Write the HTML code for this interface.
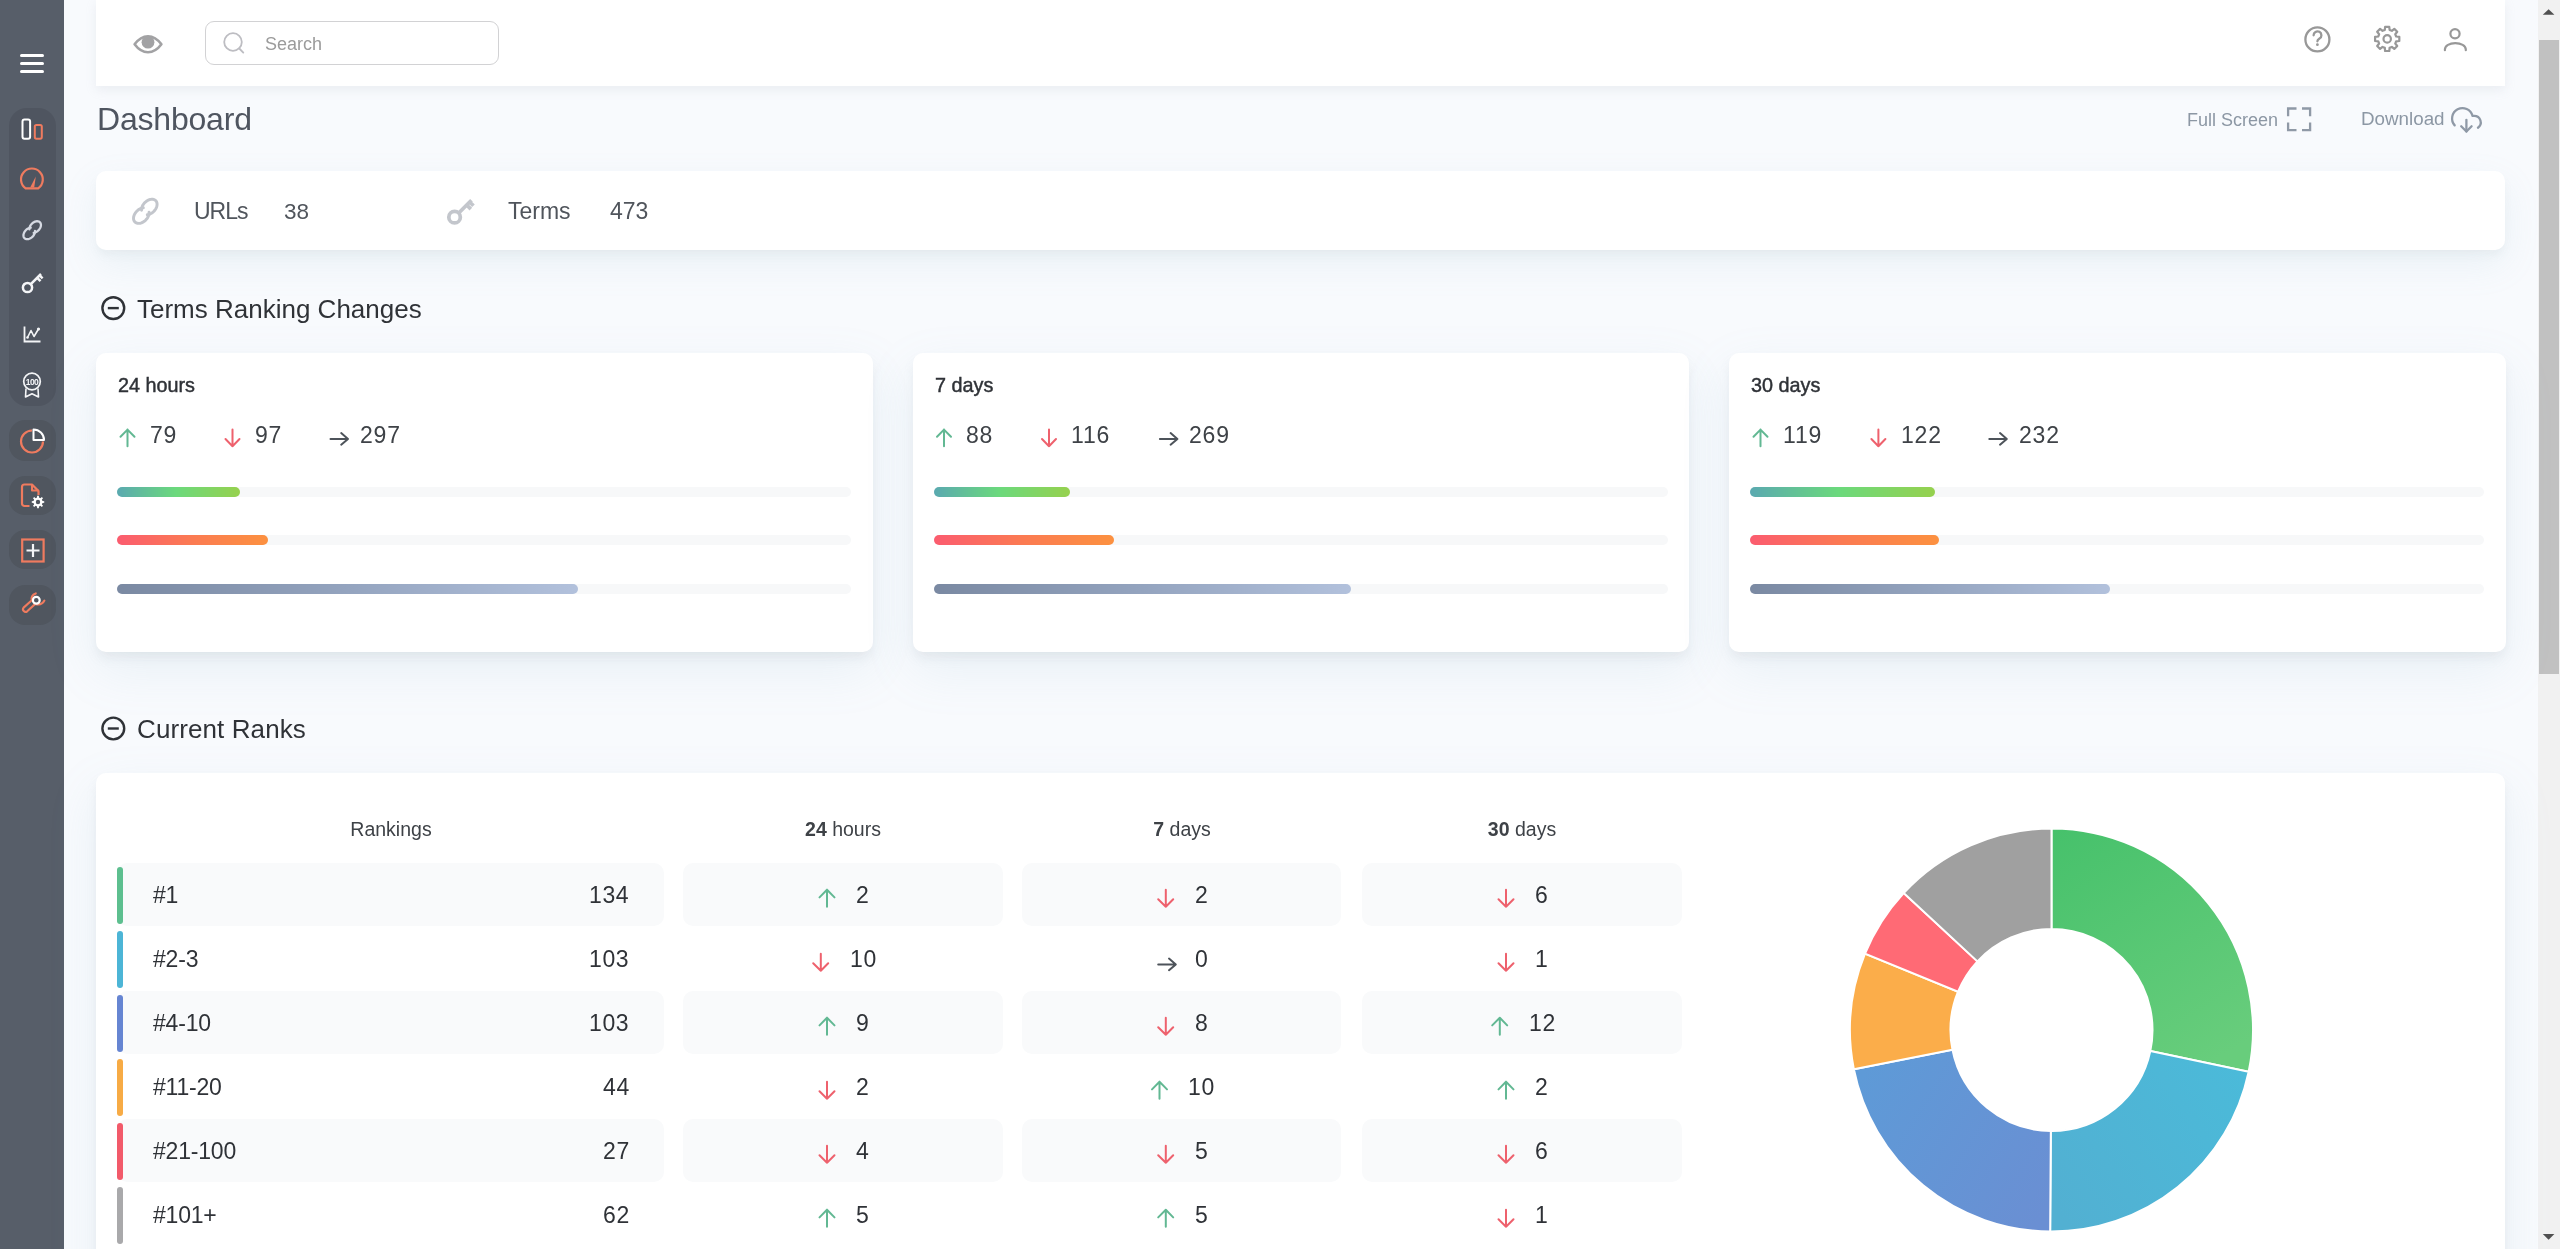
<!DOCTYPE html>
<html><head><meta charset="utf-8"><style>
*{margin:0;padding:0;box-sizing:border-box}
html,body{width:2560px;height:1249px;overflow:hidden}
body{background:#f8fafd;font-family:"Liberation Sans",sans-serif;position:relative;color:#3a3d42}
.a{position:absolute}
.t{position:absolute;line-height:1;white-space:nowrap;will-change:transform}
svg{position:absolute;overflow:visible}
</style></head><body>
<div class="a" style="left:0;top:0;width:64px;height:1249px;background:#575e69"></div>
<div class="a" style="left:20px;top:53.5px;width:24px;height:3px;border-radius:1.5px;background:#fff"></div>
<div class="a" style="left:20px;top:61.5px;width:24px;height:3px;border-radius:1.5px;background:#fff"></div>
<div class="a" style="left:20px;top:69.5px;width:24px;height:3px;border-radius:1.5px;background:#fff"></div>
<div class="a" style="left:9px;top:108px;width:47px;height:298px;background:#4f5560;border-radius:18px"></div>
<div class="a" style="left:9px;top:420px;width:47px;height:41px;background:#50565f;border-radius:16px"></div>
<div class="a" style="left:9px;top:476px;width:47px;height:39px;background:#50565f;border-radius:16px"></div>
<div class="a" style="left:9px;top:530px;width:47px;height:39px;background:#50565f;border-radius:16px"></div>
<div class="a" style="left:9px;top:585px;width:47px;height:40px;background:#50565f;border-radius:16px"></div>
<div class="a" style="left:96px;top:0;width:2409px;height:86px;background:#fff;box-shadow:0 4px 10px rgba(170,176,186,.16)"></div>
<div class="a" style="left:205px;top:21px;width:294px;height:44px;border:1.5px solid #d2d2d4;border-radius:9px;background:#fff"></div>
<div class="t" style="top:35.0px;font-size:18px;color:#9b9b9b;left:264.5px;">Search</div>
<div class="a" style="left:2538px;top:0;width:22px;height:1249px;background:#f1f1f1"></div>
<div class="a" style="left:2539px;top:40px;width:20px;height:634px;background:#c1c1c1"></div>
<svg class="a" style="left:0;top:0" width="2560" height="1249"><path d="M2542.8 14.8L2548.6 9.2L2554.4 14.8Z" fill="#505050"/><path d="M2542.8 1234L2548.6 1239.8L2554.4 1234Z" fill="#505050"/></svg>
<div class="t" style="top:103.4px;font-size:32px;color:#4f5560;left:97.3px;letter-spacing:-0.2px;">Dashboard</div>
<div class="t" style="top:110.6px;font-size:18px;color:#8c97a4;left:2187.0px;">Full Screen</div>
<div class="t" style="top:109.9px;font-size:18.8px;color:#8c97a4;left:2361.0px;">Download</div>
<div class="a" style="left:96px;top:171px;width:2409px;height:79px;background:#fff;border-radius:10px;box-shadow:0 6px 10px -2px rgba(150,154,160,.1),0 14px 36px rgba(130,180,200,.12)"></div>
<div class="t" style="top:200.3px;font-size:23px;color:#50555c;left:194.0px;letter-spacing:-1px;">URLs</div>
<div class="t" style="top:200.7px;font-size:22.5px;color:#50555c;left:283.5px;">38</div>
<div class="t" style="top:200.3px;font-size:23px;color:#50555c;left:508.0px;">Terms</div>
<div class="t" style="top:200.3px;font-size:23px;color:#50555c;left:610.0px;">473</div>
<div class="t" style="top:295.5px;font-size:26px;color:#2f3237;left:137.0px;">Terms Ranking Changes</div>
<div class="t" style="top:715.6px;font-size:26px;color:#2f3237;left:137.0px;letter-spacing:0.1px;">Current Ranks</div>
<div class="a" style="left:96px;top:353px;width:776.5px;height:299px;background:#fff;border-radius:10px;box-shadow:0 7px 12px -2px rgba(150,154,160,.16),0 18px 50px rgba(130,180,200,.13)"></div>
<div class="t" style="top:376.0px;font-size:19.8px;color:#2f3237;left:118.0px;-webkit-text-stroke:0.45px #2f3237;">24 hours</div>
<div class="a" style="left:117px;top:487.0px;width:734px;height:10px;border-radius:5px;background:#f7f8f9"></div>
<div class="a" style="left:117px;top:487.0px;width:122.6px;height:10px;border-radius:5px;background:linear-gradient(90deg,#5aa9b0,#6bd97c 48%,#96d14e)"></div>
<div class="a" style="left:117px;top:535.3px;width:734px;height:10px;border-radius:5px;background:#f7f8f9"></div>
<div class="a" style="left:117px;top:535.3px;width:150.5px;height:10px;border-radius:5px;background:linear-gradient(90deg,#fb5c6f,#fb7b52 50%,#fc9140)"></div>
<div class="a" style="left:117px;top:583.6px;width:734px;height:10px;border-radius:5px;background:#f7f8f9"></div>
<div class="a" style="left:117px;top:583.6px;width:460.9px;height:10px;border-radius:5px;background:linear-gradient(90deg,#7a89a2,#94a4bf 50%,#b2c1dc)"></div>
<div class="a" style="left:912.5px;top:353px;width:776.5px;height:299px;background:#fff;border-radius:10px;box-shadow:0 7px 12px -2px rgba(150,154,160,.16),0 18px 50px rgba(130,180,200,.13)"></div>
<div class="t" style="top:376.0px;font-size:19.8px;color:#2f3237;left:934.5px;-webkit-text-stroke:0.45px #2f3237;">7 days</div>
<div class="a" style="left:933.5px;top:487.0px;width:734px;height:10px;border-radius:5px;background:#f7f8f9"></div>
<div class="a" style="left:933.5px;top:487.0px;width:136.6px;height:10px;border-radius:5px;background:linear-gradient(90deg,#5aa9b0,#6bd97c 48%,#96d14e)"></div>
<div class="a" style="left:933.5px;top:535.3px;width:734px;height:10px;border-radius:5px;background:#f7f8f9"></div>
<div class="a" style="left:933.5px;top:535.3px;width:180.0px;height:10px;border-radius:5px;background:linear-gradient(90deg,#fb5c6f,#fb7b52 50%,#fc9140)"></div>
<div class="a" style="left:933.5px;top:583.6px;width:734px;height:10px;border-radius:5px;background:#f7f8f9"></div>
<div class="a" style="left:933.5px;top:583.6px;width:417.4px;height:10px;border-radius:5px;background:linear-gradient(90deg,#7a89a2,#94a4bf 50%,#b2c1dc)"></div>
<div class="a" style="left:1729px;top:353px;width:776.5px;height:299px;background:#fff;border-radius:10px;box-shadow:0 7px 12px -2px rgba(150,154,160,.16),0 18px 50px rgba(130,180,200,.13)"></div>
<div class="t" style="top:376.0px;font-size:19.8px;color:#2f3237;left:1751.0px;-webkit-text-stroke:0.45px #2f3237;">30 days</div>
<div class="a" style="left:1750px;top:487.0px;width:734px;height:10px;border-radius:5px;background:#f7f8f9"></div>
<div class="a" style="left:1750px;top:487.0px;width:184.7px;height:10px;border-radius:5px;background:linear-gradient(90deg,#5aa9b0,#6bd97c 48%,#96d14e)"></div>
<div class="a" style="left:1750px;top:535.3px;width:734px;height:10px;border-radius:5px;background:#f7f8f9"></div>
<div class="a" style="left:1750px;top:535.3px;width:189.3px;height:10px;border-radius:5px;background:linear-gradient(90deg,#fb5c6f,#fb7b52 50%,#fc9140)"></div>
<div class="a" style="left:1750px;top:583.6px;width:734px;height:10px;border-radius:5px;background:#f7f8f9"></div>
<div class="a" style="left:1750px;top:583.6px;width:360.0px;height:10px;border-radius:5px;background:linear-gradient(90deg,#7a89a2,#94a4bf 50%,#b2c1dc)"></div>
<div class="t" style="top:424.2px;font-size:23px;color:#3e4247;left:149.9px;letter-spacing:0.8px;">79</div>
<div class="t" style="top:424.2px;font-size:23px;color:#3e4247;left:254.9px;letter-spacing:0.8px;">97</div>
<div class="t" style="top:424.2px;font-size:23px;color:#3e4247;left:359.9px;letter-spacing:0.8px;">297</div>
<div class="t" style="top:424.2px;font-size:23px;color:#3e4247;left:966.4px;letter-spacing:0.8px;">88</div>
<div class="t" style="top:424.2px;font-size:23px;color:#3e4247;left:1071.4px;letter-spacing:0.8px;">116</div>
<div class="t" style="top:424.2px;font-size:23px;color:#3e4247;left:1189.3px;letter-spacing:0.8px;">269</div>
<div class="t" style="top:424.2px;font-size:23px;color:#3e4247;left:1782.9px;letter-spacing:0.8px;">119</div>
<div class="t" style="top:424.2px;font-size:23px;color:#3e4247;left:1900.8px;letter-spacing:0.8px;">122</div>
<div class="t" style="top:424.2px;font-size:23px;color:#3e4247;left:2018.7px;letter-spacing:0.8px;">232</div>
<div class="a" style="left:96px;top:773px;width:2409px;height:520px;background:#fff;border-radius:10px;box-shadow:0 7px 12px -2px rgba(150,154,160,.16),0 18px 50px rgba(130,180,200,.13)"></div>
<div class="t" style="left:90.5px;width:600px;text-align:center;top:819.7px;font-size:19.5px;color:#3e4247"><b></b>Rankings</div>
<div class="t" style="left:543.25px;width:600px;text-align:center;top:819.7px;font-size:19.5px;color:#3e4247"><b>24</b> hours</div>
<div class="t" style="left:882.0px;width:600px;text-align:center;top:819.7px;font-size:19.5px;color:#3e4247"><b>7</b> days</div>
<div class="t" style="left:1222.25px;width:600px;text-align:center;top:819.7px;font-size:19.5px;color:#3e4247"><b>30</b> days</div>
<div class="a" style="left:117px;top:863px;width:547px;height:63px;background:#f9fafb;border-radius:10px"></div>
<div class="a" style="left:683px;top:863px;width:319.5px;height:63px;background:#f9fafb;border-radius:10px"></div>
<div class="a" style="left:1022px;top:863px;width:319px;height:63px;background:#f9fafb;border-radius:10px"></div>
<div class="a" style="left:1361.5px;top:863px;width:320.5px;height:63px;background:#f9fafb;border-radius:10px"></div>
<div class="a" style="left:117px;top:866.5px;width:6px;height:57px;background:#5dbf8f;border-radius:3px"></div>
<div class="t" style="top:883.8px;font-size:23px;color:#2f3237;left:152.5px;letter-spacing:-0.2px;">#1</div>
<div class="t" style="top:883.8px;font-size:23px;color:#2f3237;right:1930.7px;letter-spacing:0.6px;">134</div>
<div class="t" style="top:883.8px;font-size:23px;color:#2f3237;left:855.7px;letter-spacing:0.6px;">2</div>
<div class="t" style="top:883.8px;font-size:23px;color:#2f3237;left:1194.5px;letter-spacing:0.6px;">2</div>
<div class="t" style="top:883.8px;font-size:23px;color:#2f3237;left:1534.7px;letter-spacing:0.6px;">6</div>
<div class="a" style="left:117px;top:930.5px;width:6px;height:57px;background:#4cb5d6;border-radius:3px"></div>
<div class="t" style="top:947.8px;font-size:23px;color:#2f3237;left:152.5px;letter-spacing:-0.2px;">#2-3</div>
<div class="t" style="top:947.8px;font-size:23px;color:#2f3237;right:1930.7px;letter-spacing:0.6px;">103</div>
<div class="t" style="top:947.8px;font-size:23px;color:#2f3237;left:849.5px;letter-spacing:0.6px;">10</div>
<div class="t" style="top:947.8px;font-size:23px;color:#2f3237;left:1194.5px;letter-spacing:0.6px;">0</div>
<div class="t" style="top:947.8px;font-size:23px;color:#2f3237;left:1534.7px;letter-spacing:0.6px;">1</div>
<div class="a" style="left:117px;top:991px;width:547px;height:63px;background:#f9fafb;border-radius:10px"></div>
<div class="a" style="left:683px;top:991px;width:319.5px;height:63px;background:#f9fafb;border-radius:10px"></div>
<div class="a" style="left:1022px;top:991px;width:319px;height:63px;background:#f9fafb;border-radius:10px"></div>
<div class="a" style="left:1361.5px;top:991px;width:320.5px;height:63px;background:#f9fafb;border-radius:10px"></div>
<div class="a" style="left:117px;top:994.5px;width:6px;height:57px;background:#6685d2;border-radius:3px"></div>
<div class="t" style="top:1011.8px;font-size:23px;color:#2f3237;left:152.5px;letter-spacing:-0.2px;">#4-10</div>
<div class="t" style="top:1011.8px;font-size:23px;color:#2f3237;right:1930.7px;letter-spacing:0.6px;">103</div>
<div class="t" style="top:1011.8px;font-size:23px;color:#2f3237;left:855.7px;letter-spacing:0.6px;">9</div>
<div class="t" style="top:1011.8px;font-size:23px;color:#2f3237;left:1194.5px;letter-spacing:0.6px;">8</div>
<div class="t" style="top:1011.8px;font-size:23px;color:#2f3237;left:1528.5px;letter-spacing:0.6px;">12</div>
<div class="a" style="left:117px;top:1058.5px;width:6px;height:57px;background:#f7ab45;border-radius:3px"></div>
<div class="t" style="top:1075.8px;font-size:23px;color:#2f3237;left:152.5px;letter-spacing:-0.2px;">#11-20</div>
<div class="t" style="top:1075.8px;font-size:23px;color:#2f3237;right:1930.7px;letter-spacing:0.6px;">44</div>
<div class="t" style="top:1075.8px;font-size:23px;color:#2f3237;left:855.7px;letter-spacing:0.6px;">2</div>
<div class="t" style="top:1075.8px;font-size:23px;color:#2f3237;left:1188.2px;letter-spacing:0.6px;">10</div>
<div class="t" style="top:1075.8px;font-size:23px;color:#2f3237;left:1534.7px;letter-spacing:0.6px;">2</div>
<div class="a" style="left:117px;top:1119px;width:547px;height:63px;background:#f9fafb;border-radius:10px"></div>
<div class="a" style="left:683px;top:1119px;width:319.5px;height:63px;background:#f9fafb;border-radius:10px"></div>
<div class="a" style="left:1022px;top:1119px;width:319px;height:63px;background:#f9fafb;border-radius:10px"></div>
<div class="a" style="left:1361.5px;top:1119px;width:320.5px;height:63px;background:#f9fafb;border-radius:10px"></div>
<div class="a" style="left:117px;top:1122.5px;width:6px;height:57px;background:#f25a6a;border-radius:3px"></div>
<div class="t" style="top:1139.8px;font-size:23px;color:#2f3237;left:152.5px;letter-spacing:-0.2px;">#21-100</div>
<div class="t" style="top:1139.8px;font-size:23px;color:#2f3237;right:1930.7px;letter-spacing:0.6px;">27</div>
<div class="t" style="top:1139.8px;font-size:23px;color:#2f3237;left:855.7px;letter-spacing:0.6px;">4</div>
<div class="t" style="top:1139.8px;font-size:23px;color:#2f3237;left:1194.5px;letter-spacing:0.6px;">5</div>
<div class="t" style="top:1139.8px;font-size:23px;color:#2f3237;left:1534.7px;letter-spacing:0.6px;">6</div>
<div class="a" style="left:117px;top:1186.5px;width:6px;height:57px;background:#a9a9ab;border-radius:3px"></div>
<div class="t" style="top:1203.8px;font-size:23px;color:#2f3237;left:152.5px;letter-spacing:-0.2px;">#101+</div>
<div class="t" style="top:1203.8px;font-size:23px;color:#2f3237;right:1930.7px;letter-spacing:0.6px;">62</div>
<div class="t" style="top:1203.8px;font-size:23px;color:#2f3237;left:855.7px;letter-spacing:0.6px;">5</div>
<div class="t" style="top:1203.8px;font-size:23px;color:#2f3237;left:1194.5px;letter-spacing:0.6px;">5</div>
<div class="t" style="top:1203.8px;font-size:23px;color:#2f3237;left:1534.7px;letter-spacing:0.6px;">1</div>
<svg class="a" style="left:0;top:0" width="2560" height="1249" viewBox="0 0 2560 1249"><defs><linearGradient id="dg0" gradientUnits="userSpaceOnUse" x1="2051" y1="829" x2="2200" y2="1070"><stop offset="0" stop-color="#46c16b"/><stop offset="1" stop-color="#68cd7c"/></linearGradient><linearGradient id="dg1" gradientUnits="userSpaceOnUse" x1="2051" y1="1200" x2="2240" y2="1070"><stop offset="0" stop-color="#52b0d2"/><stop offset="1" stop-color="#4bbad9"/></linearGradient><linearGradient id="dg2" gradientUnits="userSpaceOnUse" x1="1860" y1="1080" x2="2051" y2="1200"><stop offset="0" stop-color="#5e9ad7"/><stop offset="1" stop-color="#6a8fd3"/></linearGradient></defs><path d="M127.5 446.2V429.6M120.5 436.8L127.5 429.6L134.5 436.8" stroke="#62b893" stroke-width="2.0" fill="none" stroke-linecap="round" stroke-linejoin="round"/><path d="M232.5 429.6V446.2M225.5 439.0L232.5 446.2L239.5 439.0" stroke="#ee616d" stroke-width="2.0" fill="none" stroke-linecap="round" stroke-linejoin="round"/><path d="M330.5 438.9H348.0M341.2 433.1L348.0 438.9L341.2 444.7" stroke="#4d535a" stroke-width="2.0" fill="none" stroke-linecap="round" stroke-linejoin="round"/><path d="M944.0 446.2V429.6M937.0 436.8L944.0 429.6L951.0 436.8" stroke="#62b893" stroke-width="2.0" fill="none" stroke-linecap="round" stroke-linejoin="round"/><path d="M1049.0 429.6V446.2M1042.0 439.0L1049.0 446.2L1056.0 439.0" stroke="#ee616d" stroke-width="2.0" fill="none" stroke-linecap="round" stroke-linejoin="round"/><path d="M1159.9 438.9H1177.4M1170.6 433.1L1177.4 438.9L1170.6 444.7" stroke="#4d535a" stroke-width="2.0" fill="none" stroke-linecap="round" stroke-linejoin="round"/><path d="M1760.5 446.2V429.6M1753.5 436.8L1760.5 429.6L1767.5 436.8" stroke="#62b893" stroke-width="2.0" fill="none" stroke-linecap="round" stroke-linejoin="round"/><path d="M1878.4 429.6V446.2M1871.4 439.0L1878.4 446.2L1885.4 439.0" stroke="#ee616d" stroke-width="2.0" fill="none" stroke-linecap="round" stroke-linejoin="round"/><path d="M1989.3 438.9H2006.8M2000.0 433.1L2006.8 438.9L2000.0 444.7" stroke="#4d535a" stroke-width="2.0" fill="none" stroke-linecap="round" stroke-linejoin="round"/><path d="M827.0 906.8V889.8M819.5 897.4L827.0 889.8L834.5 897.4" stroke="#62b893" stroke-width="2.0" fill="none" stroke-linecap="round" stroke-linejoin="round"/><path d="M1165.8 889.8V906.8M1158.2 899.2L1165.8 906.8L1173.2 899.2" stroke="#ee616d" stroke-width="2.0" fill="none" stroke-linecap="round" stroke-linejoin="round"/><path d="M1506.0 889.8V906.8M1498.5 899.2L1506.0 906.8L1513.5 899.2" stroke="#ee616d" stroke-width="2.0" fill="none" stroke-linecap="round" stroke-linejoin="round"/><path d="M820.8 953.8V970.8M813.2 963.2L820.8 970.8L828.2 963.2" stroke="#ee616d" stroke-width="2.0" fill="none" stroke-linecap="round" stroke-linejoin="round"/><path d="M1158.2 964.4H1175.8M1169.0 958.6L1175.8 964.4L1169.0 970.2" stroke="#4d535a" stroke-width="2.0" fill="none" stroke-linecap="round" stroke-linejoin="round"/><path d="M1506.0 953.8V970.8M1498.5 963.2L1506.0 970.8L1513.5 963.2" stroke="#ee616d" stroke-width="2.0" fill="none" stroke-linecap="round" stroke-linejoin="round"/><path d="M827.0 1034.8V1017.8M819.5 1025.4L827.0 1017.8L834.5 1025.4" stroke="#62b893" stroke-width="2.0" fill="none" stroke-linecap="round" stroke-linejoin="round"/><path d="M1165.8 1017.8V1034.8M1158.2 1027.2L1165.8 1034.8L1173.2 1027.2" stroke="#ee616d" stroke-width="2.0" fill="none" stroke-linecap="round" stroke-linejoin="round"/><path d="M1499.8 1034.8V1017.8M1492.2 1025.4L1499.8 1017.8L1507.2 1025.4" stroke="#62b893" stroke-width="2.0" fill="none" stroke-linecap="round" stroke-linejoin="round"/><path d="M827.0 1081.8V1098.8M819.5 1091.2L827.0 1098.8L834.5 1091.2" stroke="#ee616d" stroke-width="2.0" fill="none" stroke-linecap="round" stroke-linejoin="round"/><path d="M1159.5 1098.8V1081.8M1152.0 1089.4L1159.5 1081.8L1167.0 1089.4" stroke="#62b893" stroke-width="2.0" fill="none" stroke-linecap="round" stroke-linejoin="round"/><path d="M1506.0 1098.8V1081.8M1498.5 1089.4L1506.0 1081.8L1513.5 1089.4" stroke="#62b893" stroke-width="2.0" fill="none" stroke-linecap="round" stroke-linejoin="round"/><path d="M827.0 1145.8V1162.8M819.5 1155.2L827.0 1162.8L834.5 1155.2" stroke="#ee616d" stroke-width="2.0" fill="none" stroke-linecap="round" stroke-linejoin="round"/><path d="M1165.8 1145.8V1162.8M1158.2 1155.2L1165.8 1162.8L1173.2 1155.2" stroke="#ee616d" stroke-width="2.0" fill="none" stroke-linecap="round" stroke-linejoin="round"/><path d="M1506.0 1145.8V1162.8M1498.5 1155.2L1506.0 1162.8L1513.5 1155.2" stroke="#ee616d" stroke-width="2.0" fill="none" stroke-linecap="round" stroke-linejoin="round"/><path d="M827.0 1226.8V1209.8M819.5 1217.4L827.0 1209.8L834.5 1217.4" stroke="#62b893" stroke-width="2.0" fill="none" stroke-linecap="round" stroke-linejoin="round"/><path d="M1165.8 1226.8V1209.8M1158.2 1217.4L1165.8 1209.8L1173.2 1217.4" stroke="#62b893" stroke-width="2.0" fill="none" stroke-linecap="round" stroke-linejoin="round"/><path d="M1506.0 1209.8V1226.8M1498.5 1219.2L1506.0 1226.8L1513.5 1219.2" stroke="#ee616d" stroke-width="2.0" fill="none" stroke-linecap="round" stroke-linejoin="round"/><path d="M2051.50 828.50A201.5 201.5 0 0 1 2248.61 1071.85L2150.30 1050.98A101.0 101.0 0 0 0 2051.50 929.00Z" fill="url(#dg0)" stroke="#fff" stroke-width="2"/><path d="M2248.61 1071.85A201.5 201.5 0 0 1 2050.16 1231.50L2050.83 1131.00A101.0 101.0 0 0 0 2150.30 1050.98Z" fill="url(#dg1)" stroke="#fff" stroke-width="2"/><path d="M2050.16 1231.50A201.5 201.5 0 0 1 1853.86 1069.23L1952.43 1049.66A101.0 101.0 0 0 0 2050.83 1131.00Z" fill="url(#dg2)" stroke="#fff" stroke-width="2"/><path d="M1853.86 1069.23A201.5 201.5 0 0 1 1865.02 953.66L1958.03 991.74A101.0 101.0 0 0 0 1952.43 1049.66Z" fill="#fbad4a" stroke="#fff" stroke-width="2"/><path d="M1865.02 953.66A201.5 201.5 0 0 1 1903.68 893.06L1977.41 961.36A101.0 101.0 0 0 0 1958.03 991.74Z" fill="#ff6a75" stroke="#fff" stroke-width="2"/><path d="M1903.68 893.06A201.5 201.5 0 0 1 2051.50 828.50L2051.50 929.00A101.0 101.0 0 0 0 1977.41 961.36Z" fill="#a0a0a0" stroke="#fff" stroke-width="2"/><rect x="22.5" y="119.4" width="7.6" height="19.3" rx="2" fill="none" stroke="#fff" stroke-width="2"/><rect x="34.8" y="125" width="7" height="13.7" rx="1.6" fill="none" stroke="#ef7b5f" stroke-width="2"/><path d="M25.6 188.3A10.9 10.9 0 1 1 38.2 188.3Z" fill="none" stroke="#ef7b5f" stroke-width="2.2" stroke-linejoin="round"/><path d="M30.2 187.5L35.8 176.5L34.2 187.5Z" fill="#ef7b5f"/><g transform="translate(32.2 230.2) rotate(-45) scale(0.78)" fill="none" stroke="#d6dae3" stroke-width="2.9" stroke-linecap="round" stroke-linejoin="round"><path d="M-1.85 -3.20L-0.95 -4.09L0.15 -4.84L1.44 -5.45L2.86 -5.89L4.37 -6.14L5.92 -6.20L7.46 -6.06L8.94 -5.73L10.31 -5.22L11.53 -4.55L12.55 -3.73L13.35 -2.80L13.89 -1.79L14.17 -0.72L14.16 0.36L13.88 1.43L13.32 2.44L12.52 3.36L11.49 4.17L10.27 4.84L8.89 5.34L7.41 5.67L5.87 5.80L4.32 5.73L2.81 5.48L1.39 5.03L0.11 4.42L-0.99 3.66"/><path d="M1.85 3.20L0.95 4.09L-0.15 4.84L-1.44 5.45L-2.86 5.89L-4.37 6.14L-5.92 6.20L-7.46 6.06L-8.94 5.73L-10.31 5.22L-11.53 4.55L-12.55 3.73L-13.35 2.80L-13.89 1.79L-14.17 0.72L-14.16 -0.36L-13.88 -1.43L-13.32 -2.44L-12.52 -3.36L-11.49 -4.17L-10.27 -4.84L-8.89 -5.34L-7.41 -5.67L-5.87 -5.80L-4.32 -5.73L-2.81 -5.48L-1.39 -5.03L-0.11 -4.42L0.99 -3.66"/></g><g transform="translate(32 283) scale(1.0)" fill="none" stroke="#f4f5f7" stroke-width="2.5" stroke-linecap="butt"><circle cx="-4.5" cy="4.5" r="4.6"/><path d="M-1.2 1.2L9 -9M5.2 -5.2L8.5 -1.9M7.6 -7.6L10.6 -4.6"/></g><path d="M24.5 326.5V341.5H40.5" fill="none" stroke="#f4f5f7" stroke-width="1.8"/><path d="M27.5 337.5L31 330.5L34 336.5L38.5 329" fill="none" stroke="#f4f5f7" stroke-width="1.6" stroke-linejoin="round"/><circle cx="38.5" cy="329" r="1.6" fill="#f4f5f7"/><circle cx="27.5" cy="337.5" r="1.3" fill="#f4f5f7"/><circle cx="32" cy="381.5" r="8.3" fill="none" stroke="#f4f5f7" stroke-width="1.7"/><path d="M26 388.5L25.5 397L32 393.8L38.5 397L38 388.5" fill="none" stroke="#f4f5f7" stroke-width="1.6" stroke-linejoin="round"/><text x="32" y="384.6" font-size="8.5" font-weight="bold" fill="#f4f5f7" text-anchor="middle" font-family="Liberation Sans" letter-spacing="-0.6">100</text><path d="M32 430.5A11 11 0 1 0 43 441.5" fill="none" stroke="#ef7b5f" stroke-width="2.2"/><path d="M33.5 429.5V440H44A10.5 10.5 0 0 0 33.5 429.5Z" fill="none" stroke="#fff" stroke-width="2" stroke-linejoin="round"/><path d="M29.5 506H24.5A2.5 2.5 0 0 1 22 503.5V487A2.5 2.5 0 0 1 24.5 484.5H32L38.5 491V495" fill="none" stroke="#ef7b5f" stroke-width="2.2" stroke-linejoin="round"/><path d="M32 484.5V490.5H38.5" fill="none" stroke="#ef7b5f" stroke-width="2" stroke-linejoin="round"/><path d="M37.01 497.51L37.14 495.76L38.86 495.76L38.99 497.51L40.48 498.13L41.80 496.98L43.02 498.20L41.87 499.52L42.49 501.01L44.24 501.14L44.24 502.86L42.49 502.99L41.87 504.48L43.02 505.80L41.80 507.02L40.48 505.87L38.99 506.49L38.86 508.24L37.14 508.24L37.01 506.49L35.52 505.87L34.20 507.02L32.98 505.80L34.13 504.48L33.51 502.99L31.76 502.86L31.76 501.14L33.51 501.01L34.13 499.52L32.98 498.20L34.20 496.98L35.52 498.13Z M38 499.8A2.2 2.2 0 1 0 38 504.2A2.2 2.2 0 1 0 38 499.8Z" fill="#fff" fill-rule="evenodd"/><rect x="22.2" y="539.5" width="21.4" height="22" fill="none" stroke="#ef7b5f" stroke-width="2.2"/><path d="M26.5 550.5H39.5M33 544V557" stroke="#f4f5f7" stroke-width="2.2"/><path d="M31.8 600.3L23.6 607.6A2.6 2.6 0 0 0 27.2 611.3L35.3 603.9" fill="none" stroke="#ef7b5f" stroke-width="2.1" stroke-linejoin="round" stroke-linecap="round"/><path d="M35.8 593.4C32.6 594.6 31 597.2 31.8 600.3M35.3 603.9C38.8 605 42.6 604 44.4 600.6" fill="none" stroke="#ef7b5f" stroke-width="2.1" stroke-linecap="round"/><circle cx="36.3" cy="600.2" r="3.4" fill="#4f5560" stroke="#fff" stroke-width="2.2"/><path d="M134.6 44.3C138.5 39 142.8 36.2 148 36.2C153.2 36.2 157.5 39 161.4 44.3C157.5 49.6 153.2 52.2 148 52.2C142.8 52.2 138.5 49.6 134.6 44.3Z" fill="none" stroke="#a2a2a4" stroke-width="2.6" stroke-linejoin="round"/><circle cx="148" cy="42.2" r="6.4" fill="#a2a2a4"/><circle cx="233" cy="42" r="8.8" fill="none" stroke="#bdbdc2" stroke-width="1.8"/><path d="M239.3 48.5L243.3 52.6" stroke="#bdbdc2" stroke-width="1.8" stroke-linecap="round"/><circle cx="2317.4" cy="39.4" r="12" fill="none" stroke="#989898" stroke-width="2.3"/><path d="M2313.6 35.3A3.9 3.9 0 1 1 2319.5 38.6C2317.8 39.6 2317.4 40.3 2317.4 41.3" fill="none" stroke="#989898" stroke-width="2.3" stroke-linecap="round"/><circle cx="2317.4" cy="44.7" r="1.4" fill="#989898"/><path d="M2384.81 29.91L2385.12 26.78L2389.28 26.78L2389.59 29.91L2391.86 30.85L2394.30 28.86L2397.24 31.80L2395.25 34.24L2396.19 36.51L2399.32 36.82L2399.32 40.98L2396.19 41.29L2395.25 43.56L2397.24 46.00L2394.30 48.94L2391.86 46.95L2389.59 47.89L2389.28 51.02L2385.12 51.02L2384.81 47.89L2382.54 46.95L2380.10 48.94L2377.16 46.00L2379.15 43.56L2378.21 41.29L2375.08 40.98L2375.08 36.82L2378.21 36.51L2379.15 34.24L2377.16 31.80L2380.10 28.86L2382.54 30.85Z" fill="none" stroke="#989898" stroke-width="2.2" stroke-linejoin="round"/><circle cx="2387.2" cy="38.9" r="3.7" fill="none" stroke="#989898" stroke-width="2.2"/><circle cx="2455" cy="33.8" r="4.6" fill="none" stroke="#989898" stroke-width="2.2"/><path d="M2444.9 50.2V49.5C2444.9 45.5 2449.6 43.2 2455.3 43.2C2461 43.2 2465.8 45.5 2465.8 49.5V50.2" fill="none" stroke="#989898" stroke-width="2.2" stroke-linecap="round"/><path d="M2288.1 116.3V108.5H2296.5M2302 108.5H2310.1V116.3M2310.1 122.5V130.1H2302M2296.5 130.1H2288.1V122.5" fill="none" stroke="#8f99a6" stroke-width="2.3"/><g transform="translate(2450.8 104.2) scale(1.3)" fill="none" stroke="#8f99a6" stroke-width="1.75" stroke-linecap="round" stroke-linejoin="round"><polyline points="8 17 12 21 16 17"/><line x1="12" y1="12" x2="12" y2="21"/><path d="M20.88 18.09A5 5 0 0 0 18 9h-1.26A8 8 0 1 0 3 16.29"/></g><g transform="translate(145.3 211.3) rotate(-45) scale(1.05)" fill="none" stroke="#c3c6cc" stroke-width="2.8" stroke-linecap="round" stroke-linejoin="round"><path d="M-1.85 -3.20L-0.95 -4.09L0.15 -4.84L1.44 -5.45L2.86 -5.89L4.37 -6.14L5.92 -6.20L7.46 -6.06L8.94 -5.73L10.31 -5.22L11.53 -4.55L12.55 -3.73L13.35 -2.80L13.89 -1.79L14.17 -0.72L14.16 0.36L13.88 1.43L13.32 2.44L12.52 3.36L11.49 4.17L10.27 4.84L8.89 5.34L7.41 5.67L5.87 5.80L4.32 5.73L2.81 5.48L1.39 5.03L0.11 4.42L-0.99 3.66"/><path d="M1.85 3.20L0.95 4.09L-0.15 4.84L-1.44 5.45L-2.86 5.89L-4.37 6.14L-5.92 6.20L-7.46 6.06L-8.94 5.73L-10.31 5.22L-11.53 4.55L-12.55 3.73L-13.35 2.80L-13.89 1.79L-14.17 0.72L-14.16 -0.36L-13.88 -1.43L-13.32 -2.44L-12.52 -3.36L-11.49 -4.17L-10.27 -4.84L-8.89 -5.34L-7.41 -5.67L-5.87 -5.80L-4.32 -5.73L-2.81 -5.48L-1.39 -5.03L-0.11 -4.42L0.99 -3.66"/></g><g transform="translate(460.2 211.5) scale(1.25)" fill="none" stroke="#c3c6cc" stroke-width="3.0" stroke-linecap="butt"><circle cx="-4.5" cy="4.5" r="4.6"/><path d="M-1.2 1.2L9 -9M5.2 -5.2L8.5 -1.9M7.6 -7.6L10.6 -4.6"/></g><circle cx="113.3" cy="308.1" r="10.9" fill="none" stroke="#2f3237" stroke-width="2.4"/><path d="M107.8 308.1H118.8" stroke="#2f3237" stroke-width="2.4"/><circle cx="113.3" cy="728.5" r="10.9" fill="none" stroke="#2f3237" stroke-width="2.4"/><path d="M107.8 728.5H118.8" stroke="#2f3237" stroke-width="2.4"/></svg>
</body></html>
